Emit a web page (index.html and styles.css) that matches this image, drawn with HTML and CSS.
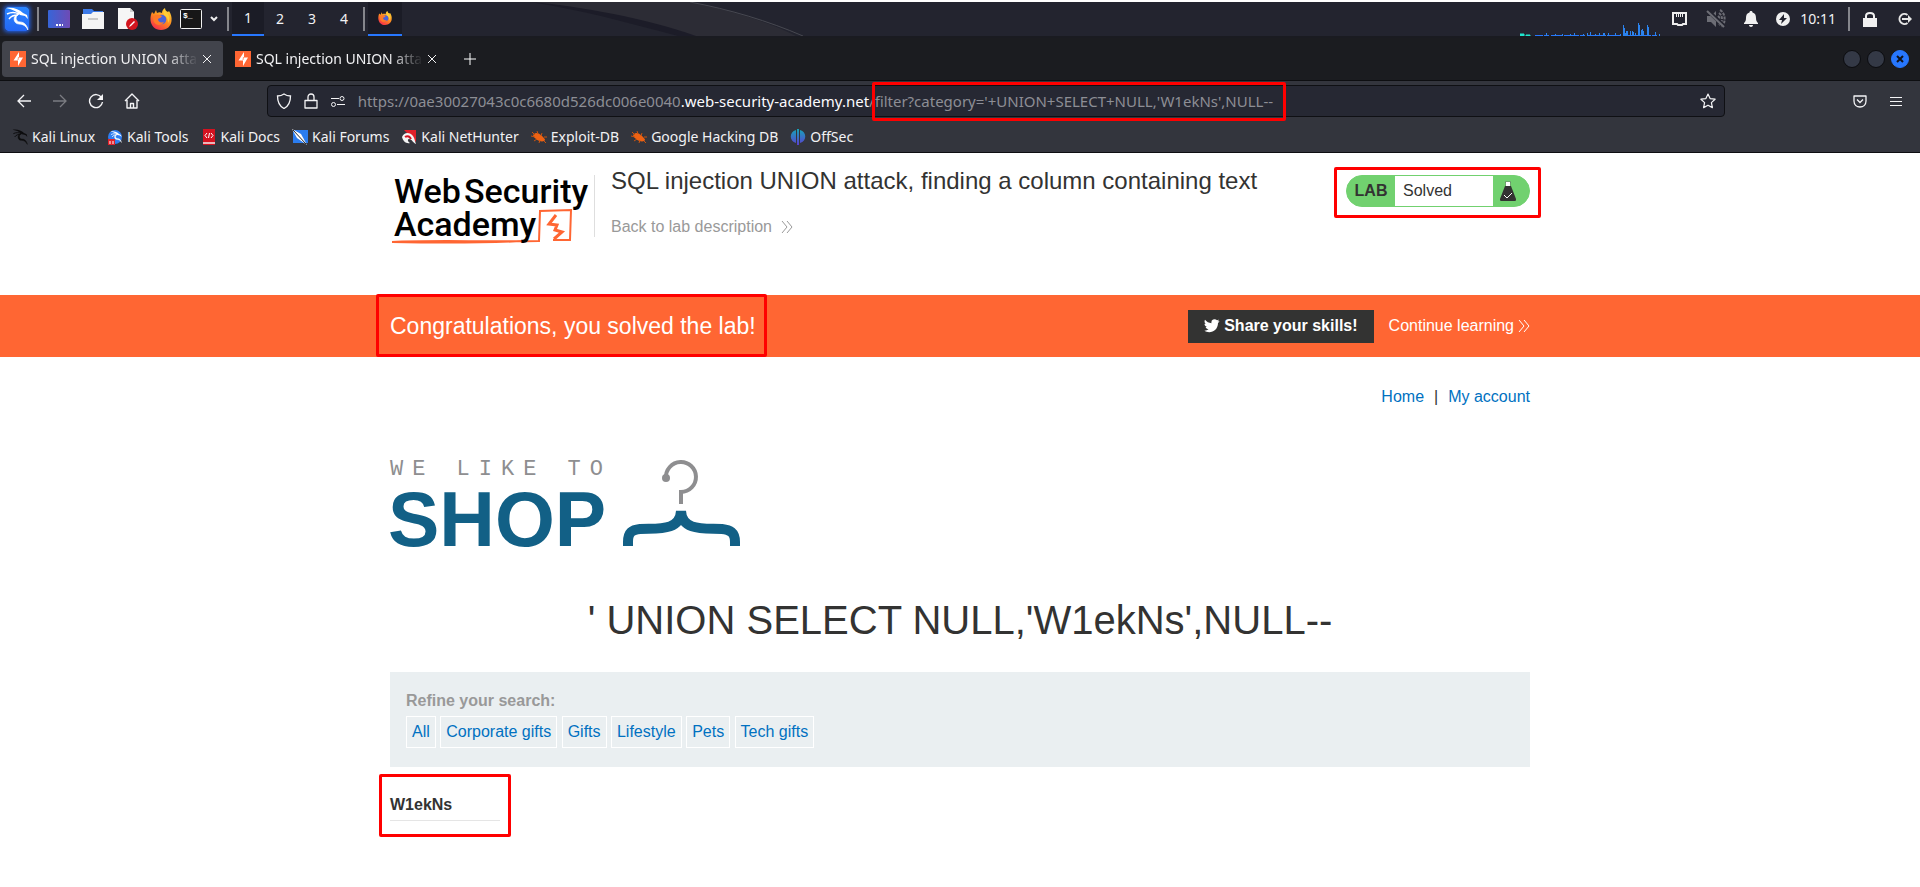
FILE: index.html
```html
<!DOCTYPE html>
<html lang="en">
<head>
<meta charset="utf-8">
<title>SQL injection UNION attack, finding a column containing text</title>
<link rel="stylesheet" href="styles.css">
</head>
<body>
<svg class="defs" width="0" height="0" aria-hidden="true">
  <defs>
    <linearGradient id="gDesk" x1="0" y1="0" x2="1" y2="0"><stop offset="0" stop-color="#3765d8"/><stop offset="1" stop-color="#6e4bb5"/></linearGradient>
    <linearGradient id="gKali" x1="0" y1="0" x2="0" y2="1"><stop offset="0" stop-color="#2a86ff"/><stop offset="1" stop-color="#2467f5"/></linearGradient>
    <linearGradient id="gFox" x1="0.8" y1="0" x2="0.2" y2="1"><stop offset="0" stop-color="#ffd93a"/><stop offset="0.5" stop-color="#ff8a1f"/><stop offset="1" stop-color="#f5254f"/></linearGradient>
    <linearGradient id="gOff" x1="0" y1="0" x2="0" y2="1"><stop offset="0" stop-color="#15a5b8"/><stop offset="1" stop-color="#5a3fd0"/></linearGradient>
    <symbol id="fox" viewBox="0 0 22 22">
      <path d="M2 4l2 2 2-4 1 3c2-1 3-1 5 0 0-2 1-4 3-5 0 2 1 3 3 4l1-1c2 3 3 6 2.500 10C21 18 17 22 11 22S1 18 .5 12C.3 9 1 6 2 4z" fill="url(#gFox)"/>
      <circle cx="11.500" cy="11.500" r="4.800" fill="#4a63d8"/>
      <path d="M4 8c3-2 5-1 8 0-1 2-3 2-4 3 0 3 3 4 6 3-2 4-8 4-10 0-1-2-1-4 0-6z" fill="#ff7a28"/>
      <path d="M15 1c0 3 3 4 4 7s0 5-1 7c0-4-1-6-4-8-1-2-1-4 1-6z" fill="#ffce38"/>
    </symbol>
    <symbol id="dragon" viewBox="0 0 24 24">
      <path d="M1 1c7-1 13 1 17 5l4 2 1 4-3-3-5-1C11 4 7 2 1 1z" fill="currentColor"/>
      <path d="M2 7c4-2 8-2 12 0M4 12c2-3 5-4 9-4" fill="none" stroke="currentColor" stroke-width="1.500"/>
      <path d="M14 7c-4 1-4 8 1 8 4 0 7 3 8 8-2-4-5-6-9-6-6 0-7-9 0-10z" fill="currentColor" stroke="currentColor" stroke-width="0.700"/>
    </symbol>
    <symbol id="burp" viewBox="0 0 16 16">
      <path d="M0 0h16v16H0z" fill="#ff6633"/>
      <path d="M9 1v5.500h4L8 15V9.500H3.500z" fill="#fff"/>
      <path d="M8.500 6L8 9" stroke="#ff6633" stroke-width="0.700"/>
    </symbol>
    <symbol id="bug" viewBox="0 0 16 16">
      <path d="M3 5c2-2 5-1 8 2s4 4 2 5-6 0-8-2-4-3-2-5z" fill="#ee6213"/>
      <path d="M1 3l3 3M6 2l1 3M11 4l-1 3M0 7l4 1M3 12l3-2M8 14l1-3M13 8l3 0M13 12l2 2" stroke="#c9530f" stroke-width="1"/>
    </symbol>
    <symbol id="chev" viewBox="0 0 12 12">
      <path d="M1 0l5 6-5 6M6 0l5 6-5 6" fill="none" stroke="currentColor" stroke-width="1"/>
    </symbol>
  </defs>
</svg>

<header class="panel">
  <svg class="panel-art" viewBox="0 0 300 36" preserveAspectRatio="none" aria-hidden="true">
    <path d="M0 0h160c40 9 76 20 106 36H156C108 20 66 8 0 0z" fill="#2c2c35"/>
    <path d="M0 0c50 4 118 18 166 36H148C98 22 50 8 0 0z" fill="#1c1c28"/>
    <path d="M160 0c40 8 78 20 113 36" fill="none" stroke="#484952"/>
  </svg>
  <button class="start" aria-label="Applications"><svg width="24" height="24"><rect width="24" height="24" rx="3" fill="url(#gKali)"/><use href="#dragon" width="24" height="24"/></svg></button>
  <i class="sep"></i>
  <div class="launchers">
    <svg width="22" height="22"><rect y="2" width="22" height="18" rx="1" fill="url(#gDesk)"/><path d="M8 16h2v2H8zM11 16h2v2h-2zM14 16h1v2h-1z" fill="#fff"/></svg>
    <svg width="22" height="22"><path d="M1 1h9l2 2h9v7H1z" fill="#3c7ae8"/><path d="M0 6h9l2-2h11v17H0z" fill="#f4f4f4"/><path d="M6 10h10v2H6z" fill="#c9c9c9"/></svg>
    <svg width="22" height="22"><path d="M2 0h12l4 4v17H2z" fill="#f6f6f6"/><path d="M14 0v4h4z" fill="#cfcfcf"/><circle cx="16" cy="16" r="6" fill="#d3151e"/><path d="M13 19l1-2 4-4 1 1-4 4z" fill="#fff"/></svg>
    <svg width="22" height="22"><use href="#fox" width="22" height="22"/></svg>
    <div class="term">
      <svg width="22" height="22"><rect x="0.500" y="1.500" width="21" height="19" rx="1" fill="#171717" stroke="#f2f2f2"/><text x="3" y="10" class="prompt">$_</text></svg>
      <svg width="8" height="6"><path d="M1 1l3 3 3-3" fill="none" stroke="#eee" stroke-width="2"/></svg>
    </div>
  </div>
  <i class="sep"></i>
  <nav class="spaces">
    <button class="on">1</button><button>2</button><button>3</button><button>4</button>
  </nav>
  <i class="sep"></i>
  <button class="task" aria-label="Firefox"><svg width="14" height="14"><use href="#fox" width="14" height="14"/></svg></button>
  <div class="tray">
    <svg class="graph" width="142" height="34">
      <path d="M0 32h4v2H0zM6 33h4v1H6z" fill="#1fe6cd" stroke="#1fe6cd"/>
      <path d="M15 33.500H140" stroke="#2777ff" stroke-dasharray="8 1 5 2 12 1 6 1"/>
      <path d="M26.500 31v3M35.500 32v2M42.500 32v2M50.500 32v2M54.500 31v3M63.500 32v2M67.500 31v3M70.500 30v4M75.500 32v2M79.500 31v3M83.500 31v3M84.500 31v3M88.500 31v3M95.500 31v3M100.500 32v2M103.500 23v11M104.500 26v8M105.500 31v3M106.500 29v5M107.500 29v5M110.500 29v5M112.500 29v5M113.500 30v4M115.500 31v3M118.500 21v13M119.500 23v11M121.500 28v6M122.500 27v7M123.500 29v5M127.500 23v11M128.500 25v9M135.500 30v4M139.500 32v2" stroke="#2b83ee"/>
    </svg>
    <svg width="16" height="14"><path d="M1 1h13v11H11l-1 1H6l-1-1H1z" fill="none" stroke="#eee" stroke-width="2"/><path d="M4.500 2v3M6.500 2v3M8.500 2v3M10.500 2v3" stroke="#eee"/></svg>
    <svg width="20" height="20"><path d="M1 7h4l5-5v16l-5-5H1z" fill="#6c6d75"/><path d="M12 7c2 2 2 4 0 6M13 4c4 3 4 9 0 12M14 1c6 3 6 14 1 17" fill="none" stroke="#6c6d75" stroke-width="2" stroke-dasharray="3 1"/><path d="M1 1l18 17" stroke="#23242f" stroke-width="4"/><path d="M1 2l17 16" stroke="#6c6d75" stroke-width="2"/></svg>
    <svg width="14" height="16"><path d="M7 0c1 0 1.500.5 1.500 1.500C11 2 12 4 12 7c0 3 1 4 2 5v1H0v-1c1-1 2-2 2-5 0-3 1-5 3.500-5.500C5.500.5 6 0 7 0zM5 14h4c0 1-1 2-2 2s-2-1-2-2z" fill="#f0f0f0"/></svg>
    <svg width="14" height="14"><circle cx="7" cy="7" r="7" fill="#f0f0f0"/><path d="M8 2L3 8h3l-1 4 6-6H8z" fill="#23242f"/></svg>
    <time>10:11</time>
    <i class="sep"></i>
    <svg width="14" height="15"><path d="M3 7V4c0-4 8-4 8 0v3" fill="none" stroke="#f0f0f0" stroke-width="2"/><path d="M0 6h14v9H0z" fill="#f0f0f0"/></svg>
    <svg class="exit" width="15" height="14"><path d="M10.500 3A5 5 0 1 0 10.500 11" fill="none" stroke="#e6e6e6" stroke-width="2"/><path d="M5 6h6V3l4 4-4 4V8H5z" fill="#e6e6e6"/></svg>
  </div>
</header>

<div class="tabs">
  <div class="tab active"><svg width="16" height="16"><use href="#burp"/></svg><span>SQL injection UNION attack, finding</span><button aria-label="Close tab"><svg width="8" height="8"><path d="M0 0l8 8M8 0L0 8" stroke="currentColor"/></svg></button></div>
  <div class="tab"><svg width="16" height="16"><use href="#burp"/></svg><span>SQL injection UNION attack, finding</span><button aria-label="Close tab"><svg width="8" height="8"><path d="M0 0l8 8M8 0L0 8" stroke="currentColor"/></svg></button></div>
  <button class="newtab" aria-label="New tab"><svg width="12" height="12"><path d="M6 0v12M0 6h12" stroke="#fff"/></svg></button>
  <div class="wincontrols">
    <button aria-label="Minimize"></button><button aria-label="Maximize"></button>
    <button class="close" aria-label="Close"><svg width="8" height="8"><path d="M1 1l6 6M7 1L1 7" stroke="#10131c" stroke-width="2"/></svg></button>
  </div>
</div>

<div class="toolbar">
  <div class="navbtns">
    <button aria-label="Back"><svg width="16" height="16"><path d="M15 8H2M8 2L2 8l6 6" fill="none" stroke="#f4f4f6" stroke-width="1.300"/></svg></button>
    <button aria-label="Forward"><svg width="16" height="16"><path d="M1 8h13M8 2l6 6-6 6" fill="none" stroke="#7b7c82" stroke-width="1.300"/></svg></button>
    <button aria-label="Reload"><svg width="16" height="16"><path d="M13.500 4.500A6.500 6.500 0 1 0 14.500 9" fill="none" stroke="#f4f4f6" stroke-width="1.400"/><path d="M15 1v6H9z" fill="#f4f4f6"/></svg></button>
    <button aria-label="Home"><svg width="16" height="16"><path d="M1 8l7-7 7 7M3 7v8h10V7M6.500 15v-4.500h3V15" fill="none" stroke="#f4f4f6" stroke-width="1.400" stroke-linejoin="round"/></svg></button>
  </div>
  <div class="urlbar">
    <svg width="16" height="16"><path d="M8 1c2 1.500 4 2 6.500 2 0 6-1.500 10-6.500 12.500C3 13 1.500 9 1.500 3 4 3 6 2.500 8 1z" fill="none" stroke="#f4f4f6" stroke-width="1.300"/></svg>
    <svg width="14" height="16"><path d="M1 7.500h12v7.500H1zM4 7V4c0-4 6-4 6 0v3" fill="none" stroke="#f4f4f6" stroke-width="1.300" stroke-linejoin="round"/></svg>
    <svg width="16" height="12"><path d="M1 3.500h8M7 9.500h8" stroke="#f4f4f6"/><circle cx="12" cy="3.500" r="2" fill="none" stroke="#f4f4f6"/><circle cx="3.500" cy="9.500" r="2" fill="none" stroke="#f4f4f6"/></svg>
    <div class="url" role="textbox" aria-label="Address" contenteditable="true" spellcheck="false">https://0ae30027043c0c6680d526dc006e0040<b>.web-security-academy.net</b>/<span class="path">filter?category='+UNION+SELECT+NULL,'W1ekNs',NULL--<i class="mark mark-url"></i></span></div>
    <button class="star" aria-label="Bookmark"><svg width="16" height="16"><path d="M8 1l2.100 4.600 5 .6-3.700 3.400 1 5L8 12.200l-4.400 2.400 1-5L.9 6.200l5-.6z" fill="none" stroke="#f4f4f6" stroke-width="1.200" stroke-linejoin="round"/></svg></button>
  </div>
  <div class="tools">
    <button aria-label="Pocket"><svg width="14" height="13"><path d="M1 1h12v5c0 8-12 8-12 0z" fill="none" stroke="#f4f4f6" stroke-width="1.300" stroke-linejoin="round"/><path d="M4 4.500l3 3 3-3" fill="none" stroke="#f4f4f6" stroke-width="1.300"/></svg></button>
    <button aria-label="Menu"><svg width="12" height="11"><path d="M0 1.500h12M0 5.500h12M0 9.500h12" stroke="#f4f4f6"/></svg></button>
  </div>
</div>

<nav class="bookmarks">
  <a href="#"><svg class="ink" width="16" height="16"><use href="#dragon"/></svg>Kali Linux</a>
  <a href="#"><svg width="16" height="16"><circle cx="8" cy="8" r="7" fill="#2f7df0"/><use href="#dragon" x="3" y="2" width="12" height="12"/><path d="M1 10h7v6H1z" fill="#e0202a"/><path d="M3 15v-3M6 15v-3" stroke="#fff"/></svg>Kali Tools</a>
  <a href="#"><svg width="16" height="16"><path d="M2 0h12v16H2z" fill="#d41220"/><path d="M2 13h12v2H2z" fill="#e9b6ba"/><path d="M6 4L4 6.500 6 9M10 4l2 2.500L10 9M8.500 4l-1 5" fill="none" stroke="#fff"/></svg>Kali Docs</a>
  <a href="#"><svg width="16" height="16"><path d="M1 1h15v13H1z" fill="#2b7df0"/><path d="M0 0l9 5 6 11-10-7z" fill="#fff"/><path d="M1 1l13 14" stroke="#20242c"/></svg>Kali Forums</a>
  <a href="#"><svg width="16" height="16"><path d="M3 1h12v12z" fill="#e0202a"/><path d="M1 8c2-5 8-5 11-1 2 3 2 6 3 8-3-1-4-5-7-5-2 0-1 3 1 4-4 1-7-2-8-6z" fill="#f4f4f4"/><path d="M4 8c3-2 5 0 6 2" fill="none" stroke="#d41220" stroke-width="2"/></svg>Kali NetHunter</a>
  <a href="#"><svg width="16" height="16"><use href="#bug"/></svg>Exploit-DB</a>
  <a href="#"><svg width="16" height="16"><use href="#bug"/></svg>Google Hacking DB</a>
  <a href="#"><svg width="16" height="16"><path d="M6 1v13C-1 12-1 3 6 1zM10 1v13c7-2 7-11 0-13zM7 0h2v16H7z" fill="url(#gOff)"/></svg>OffSec</a>
</nav>

<main>
  <section class="lab container">
    <svg class="wsa" width="200" height="74" role="img" aria-label="Web Security Academy">
      <path d="M2 67c40-2 90 0 147-1l1-30 31-1-1 30-17 0M2 67c50 1 90 1 132-1" fill="none" stroke="#ff6633" stroke-width="2"/>
      <path d="M166 40l-7 9 8 1-2 5 7 2-8 7" fill="none" stroke="#ff6633" stroke-width="3"/>
      <text x="4" y="28">Web</text><text x="74" y="28">Security</text><text x="4" y="61">Academy</text>
    </svg>
    <div class="lab-title">
      <h2>SQL injection UNION attack, finding a column containing text</h2>
      <a href="#">Back to lab description <svg width="12" height="12"><use href="#chev"/></svg></a>
    </div>
    <div class="badge">
      <strong>LAB</strong><span>Solved</span>
      <svg width="16" height="20"><path d="M5 1h6M6 1v6M10 1v6" stroke="#6b7f6b"/><path d="M6 1h4v5H6z" fill="#fff"/><path d="M5 5h6l5 13c0 1 0 2-1 2H1c-1 0-1-1-1-2z" fill="#333332"/><path d="M4 14l3 3 5-5" fill="none" stroke="#fff"/></svg>
      <i class="mark mark-badge"></i>
    </div>
  </section>

  <section class="banner">
    <div class="container">
      <h4>Congratulations, you solved the lab!<i class="mark mark-banner"></i></h4>
      <button class="share"><svg width="16" height="14"><path d="M15.500 2c-.6.300-1.200.5-1.900.5C14.300 2 14.800 1.300 15 .5c-.6.400-1.300.6-2 .8A3.200 3.200 0 0 0 7.500 4.200C4.900 4 2.500 2.800 1 .8.100 2.300.6 4.100 2 5.100c-.5 0-1-.2-1.500-.4 0 1.600 1.100 2.900 2.600 3.200-.5.100-1 .1-1.500 0 .4 1.300 1.600 2.200 3 2.300A6.500 6.500 0 0 1 0 11.600C6 15.500 14 12 14 4.100c.6-.5 1.100-1.200 1.500-2.100z" fill="#fff"/></svg>Share your skills!</button>
      <a href="#">Continue learning <svg width="12" height="12"><use href="#chev"/></svg></a>
    </div>
  </section>

  <div class="container shop">
    <nav class="links"><a href="#">Home</a><span>|</span><a href="#">My account</a></nav>
    <svg class="shoplogo" width="352" height="92" role="img" aria-label="We like to shop">
      <text class="small" x="0" y="16">WE LIKE TO</text>
      <text class="big" x="-2" y="87">SHOP</text>
      <path d="M276 19a15 15 0 1 1 15 14v12" fill="none" stroke="#8e8e90" stroke-width="4"/>
      <circle cx="276" cy="19" r="4" fill="#8e8e90"/>
      <path d="M238 87v-4c0-10 4-12 12-13 16-1 40 3 41-18 1 21 25 17 41 18 8 1 13 3 13 13v4" fill="none" stroke="#126086" stroke-width="10"/>
    </svg>
    <h1>' UNION SELECT NULL,'W1ekNs',NULL--</h1>
    <section class="filters">
      <strong>Refine your search:</strong>
      <div>
        <a href="#">All</a>
        <a href="#">Corporate gifts</a>
        <a href="#">Gifts</a>
        <a href="#">Lifestyle</a>
        <a href="#">Pets</a>
        <a href="#">Tech gifts</a>
      </div>
    </section>
    <div class="results">
      <table><tbody><tr><th>W1ekNs</th></tr></tbody></table>
      <i class="mark mark-result"></i>
    </div>
  </div>
</main>
</body>
</html>
```
FILE: styles.css
```css
* { box-sizing: border-box; }
body { margin: 0; background: #fff; color: #333332; font: 16px/24px "Liberation Sans", Arial, sans-serif; }
svg { display: block; flex: none; }
.defs { position: absolute; }
button { padding: 0; border: 0; background: none; color: inherit; font: inherit; display: flex; align-items: center; justify-content: center; }
a { color: #0071c1; text-decoration: none; }
h1, h2, h4 { margin: 0; font-weight: 400; }

.panel, .tabs, .toolbar, .bookmarks { display: flex; align-items: center; color: #f2f2f4; font-family: "Noto Sans", sans-serif; font-size: 15px; line-height: 20px; }

.panel { position: relative; height: 38px; border-top: 2px solid #fff; border-bottom: 2px solid #1a1b21; background: #23242f; font-size: 14px; }
.panel-art { position: absolute; left: 530px; top: 0; width: 300px; height: 34px; }
.sep { flex: none; width: 2px; height: 24px; background: #85868c; }
.start { width: 34px; height: 34px; margin-right: 3px; }
.start svg { color: #fff; border-radius: 3px; box-shadow: 0 0 4px 1px #2467f5; }
.launchers { display: flex; align-items: center; gap: 12px; margin: 0 9px; }
.term { display: flex; align-items: center; gap: 8px; margin-left: -4px; }
.prompt { fill: #fff; font: bold 8px "Liberation Mono", monospace; }
.spaces { display: flex; margin: 0 3px; }
.spaces button { width: 32px; height: 34px; }
.task { width: 34px; height: 34px; margin-left: 3px; }
.spaces .on, .task { background: #1b1c26; border-bottom: 2px solid #2777ff; }
.tray { display: flex; align-items: center; margin-left: auto; gap: 18px; padding-right: 8px; }
.tray .graph { margin-right: -8px; }
.tray time { margin-left: -8px; }
.tray .sep { margin-left: -6px; }
.tray .sep + svg { margin-left: -5px; }
.tray .exit { margin-left: 2px; }

.tabs { height: 43px; padding: 0 11px 0 2px; gap: 4px; background: #1b1c20; border-bottom: 1px solid #0d0e11; font-size: 14px; }
.tab { display: flex; align-items: center; width: 221px; height: 36px; padding: 0 12px 0 8px; gap: 5px; border-radius: 4px; }
.tab.active { background: #42444c; }
.tab span { flex: 1; overflow: hidden; white-space: nowrap; mask-image: linear-gradient(to right, #000 80%, transparent); }
.newtab { width: 36px; height: 36px; }
.wincontrols { display: flex; gap: 6px; margin-left: auto; }
.wincontrols button { width: 18px; height: 18px; border-radius: 50%; background: #343946; border: 1px solid #0b0c0f; }
.wincontrols .close { background: #2777ff; border-color: #2777ff; }

.toolbar { display: grid; grid-template-columns: 144px 2fr 25fr 2fr 72px; height: 40px; padding: 0 6px; background: #33353d; }
.navbtns, .tools { display: flex; }
.navbtns button, .tools button { width: 36px; height: 32px; }
.urlbar { grid-column: 3; display: flex; align-items: center; height: 32px; padding: 0 8px; gap: 12px; border: 1px solid #0f1014; border-radius: 4px; background: #262833; }
.tools { grid-column: 5; }
.url { flex: 1; white-space: nowrap; color: #8d8e95; outline: 0; }
.url b { color: #fbfbfe; font-weight: 400; }
.path { position: relative; }

.bookmarks { height: 32px; padding: 0 12px; gap: 12px; background: #33353d; border-bottom: 1px solid #0d0e11; font-size: 14px; }
.bookmarks a { display: flex; align-items: center; gap: 4px; color: #f2f2f4; }
.bookmarks svg { color: #fff; }
.bookmarks .ink { color: #0c0c0e; }

.mark { position: absolute; border: 3px solid #f00; border-radius: 2px; pointer-events: none; }
.mark-url { inset: -9px -13px -10px -3px; }
.mark-badge { inset: -9px -12px -12px -13px; }
.mark-banner { inset: -16px -11px -15px -14px; }
.mark-result { inset: -15px -11px -16px -11px; }

.container { width: 1140px; max-width: 100%; margin: 0 auto; }
main { padding-bottom: 64px; }
.lab { display: flex; align-items: flex-start; height: 142px; padding-top: 22px; }
.wsa text { font: 500 34px Roboto, sans-serif; fill: #000; }
.lab-title { flex: 1; margin-left: 4px; padding-left: 16px; height: 62px; border-left: 1px solid #dedede; }
.lab-title h2 { margin-top: -8px; font-size: 24px; line-height: 28px; }
.lab-title a { display: flex; align-items: center; gap: 9px; margin-top: 20px; color: #999; }
.badge { position: relative; display: flex; align-items: center; width: 184px; height: 32px; border: 1px solid #71d16f; border-radius: 16px; background: #71d16f; }
.badge strong { width: 48px; text-align: center; }
.badge span { flex: 1; height: 30px; padding-left: 8px; line-height: 30px; background: #fff; }
.badge svg { margin: 0 13px 0 7px; }

.banner { background: #ff6633; color: #fff; }
.banner .container { display: flex; align-items: center; height: 62px; }
.banner h4 { position: relative; margin-right: auto; font-size: 23px; line-height: 32px; }
.share { height: 33px; padding: 0 16px; gap: 4px; margin-right: 15px; background: #333332; font-weight: 700; }
.banner a { display: flex; align-items: center; gap: 4px; color: #fff; }

.links { display: flex; justify-content: flex-end; gap: 10px; padding-top: 28px; }
.shoplogo { margin-top: 50px; overflow: visible; }
.shoplogo .small { fill: #8e8e90; font: 22px "Liberation Mono", monospace; letter-spacing: 9px; }
.shoplogo .big { fill: #126086; font: bold 77px "Liberation Sans", Arial, sans-serif; }
h1 { margin: 44px 0 27px; font-size: 40px; line-height: 50px; text-align: center; }
.filters { padding: 17px 16px 19px; background: #eaeff1; }
.filters strong { display: block; color: #999; }
.filters div { margin-top: 3px; }
.filters a { display: inline-block; padding: 3px 5px; border: 1px solid #fff; }
.results { position: relative; width: 110px; margin-top: 22px; }
.results table { width: 100%; border-spacing: 0; }
.results th { padding: 4px 0 3px; border-bottom: 1px solid #e5e5e5; text-align: left; }
```
